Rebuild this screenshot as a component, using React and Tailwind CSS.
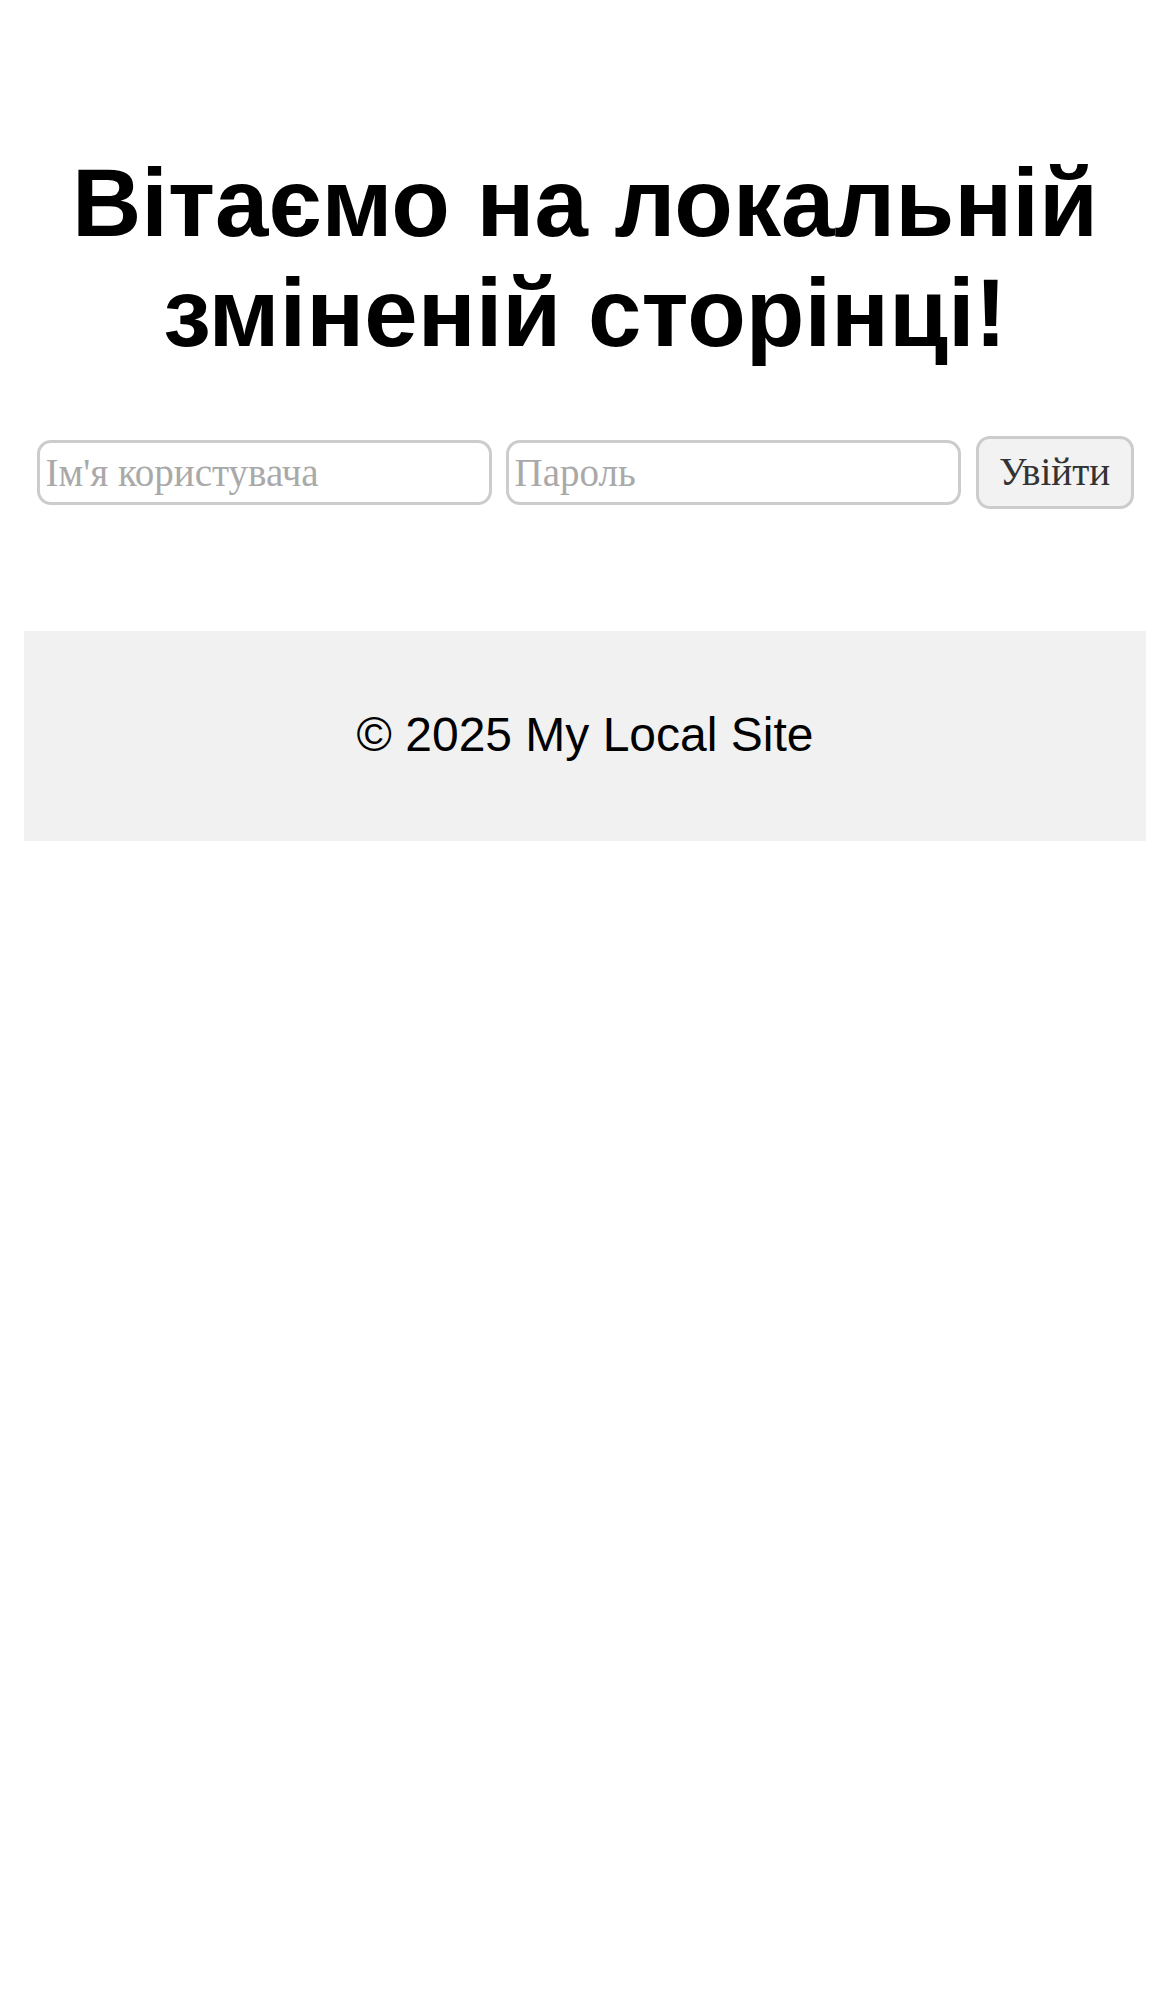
import React, { useState } from "react";

const App = () => {
  const [username, setUsername] = useState("");
  const [password, setPassword] = useState("");

  return (
    <div className="min-h-[1992px] bg-white px-[24px] font-['Liberation_Sans',Arial,sans-serif] text-black">
      {/* Heading */}
      <h1 className="pt-[148px] text-center text-[96px] font-bold leading-[110px]">
        Вітаємо на локальній
        <br />
        зміненій сторінці!
      </h1>

      {/* Login form */}
      <form
        onSubmit={(e) => e.preventDefault()}
        className="mt-[68px] flex items-center justify-center gap-[14px] font-['Liberation_Serif','Times_New_Roman',serif]"
      >
        <input
          type="text"
          value={username}
          onChange={(e) => setUsername(e.target.value)}
          placeholder="Ім'я користувача"
          className="h-[65px] w-[455px] rounded-[14px] border-[3px] border-[#cccccc] px-[6px] text-[39px] text-[#333] placeholder:text-[#a9a9a9] outline-none"
        />
        <input
          type="password"
          value={password}
          onChange={(e) => setPassword(e.target.value)}
          placeholder="Пароль"
          className="h-[65px] w-[455px] rounded-[14px] border-[3px] border-[#cccccc] px-[6px] text-[39px] text-[#333] placeholder:text-[#a9a9a9] outline-none"
        />
        <button
          type="submit"
          className="ml-px h-[73px] w-[158px] rounded-[14px] border-[3px] border-[#cccccc] bg-[#f2f2f2] text-[39px] text-[#333]"
        >
          Увійти
        </button>
      </form>

      {/* Footer */}
      <footer className="mt-[122px] h-[210px] bg-[#f1f1f1] pt-[76px] text-center">
        <p className="text-[48px] leading-[55px]">© 2025 My Local Site</p>
      </footer>
    </div>
  );
};

export default App;
